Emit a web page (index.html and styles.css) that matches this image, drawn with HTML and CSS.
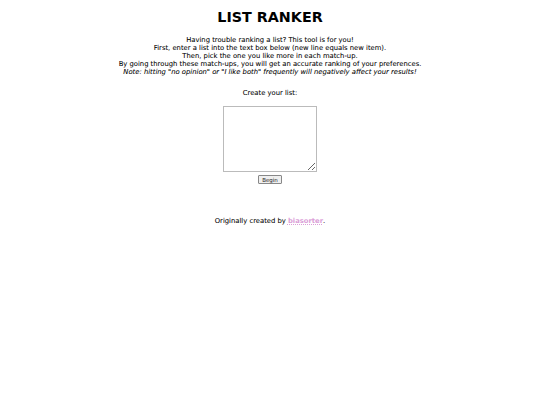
FILE: index.html
```html
<!DOCTYPE html>
<html>
<head>
<meta charset="utf-8">
<link rel="stylesheet" href="styles.css">
</head>
<body>
<div class="page">
  <h1 class="title">LIST RANKER</h1>
  <div class="intro">
    <p>Having trouble ranking a list? This tool is for you!</p>
    <p>First, enter a list into the text box below (new line equals new item).</p>
    <p>Then, pick the one you like more in each match-up.</p>
    <p>By going through these match-ups, you will get an accurate ranking of your preferences.</p>
    <p class="note">Note: hitting "no opinion" or "I like both" frequently will negatively affect your results!</p>
  </div>
  <div class="create">
    <p class="label">Create your list:</p>
    <textarea class="list-input"></textarea>
    <button class="begin">Begin</button>
  </div>
  <p class="credit">Originally created by <a href="#" class="credit-link">biasorter</a>.</p>
</div>
</body>
</html>
```
FILE: styles.css
```css
html, body {
  margin: 0;
  padding: 0;
  background: #fff;
}
.page {
  font-family: "DejaVu Sans", Verdana, sans-serif;
  color: #000;
  text-align: center;
  padding-top: 8px;
}
.title {
  margin: 0;
  font-size: 14.3px;
  line-height: 18px;
  font-weight: bold;
  color: #000;
}
.intro {
  margin-top: 10px;
  font-size: 6.8px;
  line-height: 8px;
  -webkit-text-stroke: 0.06px #000;
}
.intro p {
  margin: 0;
}
.note {
  font-style: italic;
}
.create {
  margin-top: 12px;
  display: flex;
  flex-direction: column;
  align-items: center;
}
.label {
  margin: 0;
  font-size: 6.8px;
  line-height: 10px;
  -webkit-text-stroke: 0.06px #000;
}
.list-input {
  margin-top: 8px;
  width: 94px;
  height: 66px;
  box-sizing: border-box;
  border: 1px solid #bbb;
  padding: 0;
  resize: both;
}
.begin {
  margin-top: 3px;
  height: 9px;
  box-sizing: border-box;
  font-family: "DejaVu Sans", sans-serif;
  font-size: 5.5px;
  line-height: 6px;
  padding: 0 3px;
  border: 1px solid #888;
  border-radius: 1px;
  background: #efefef;
  color: #222;
}
.credit {
  margin: 32px 0 0;
  font-size: 6.8px;
  line-height: 10px;
  -webkit-text-stroke: 0.06px #000;
}
.credit-link {
  color: #dba0d8;
  -webkit-text-stroke: 0;
  text-decoration: underline dotted;
  font-weight: bold;
}
```
